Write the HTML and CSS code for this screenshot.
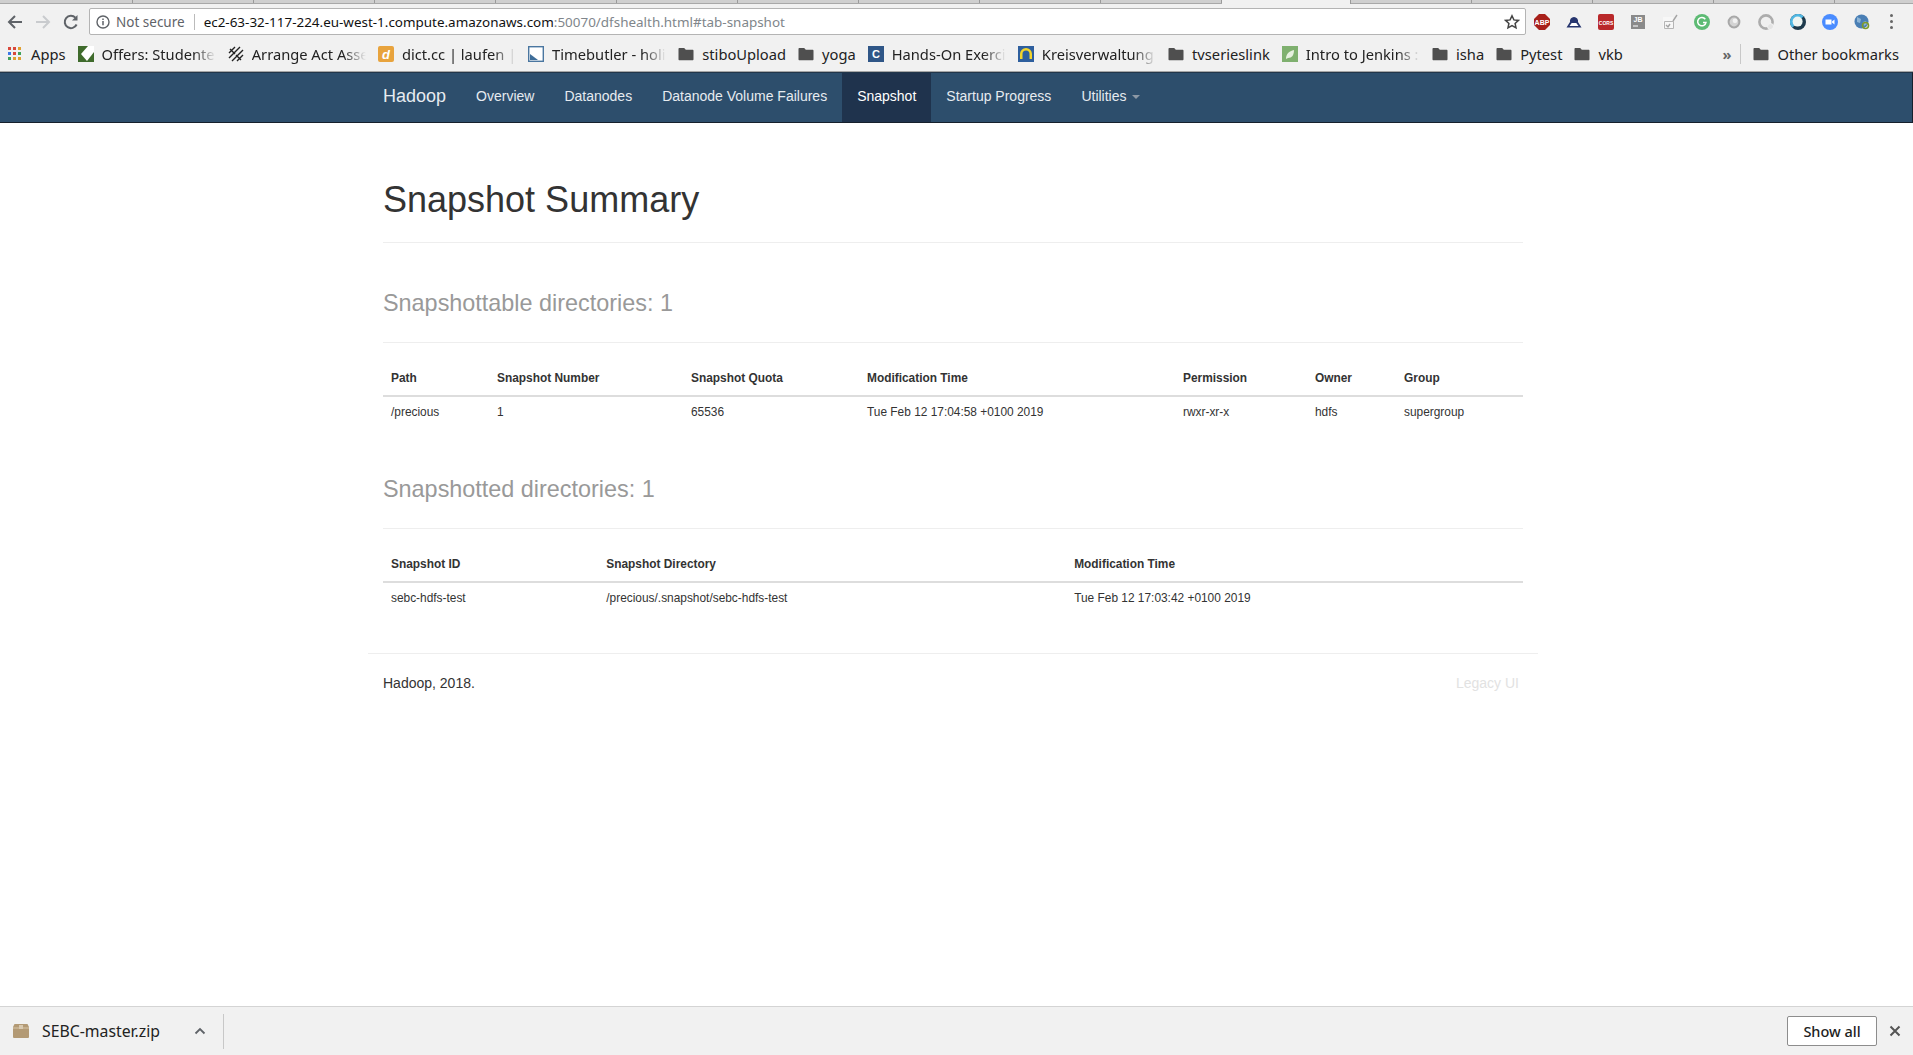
FILE: index.html
```html
<!DOCTYPE html>
<html lang="en">
<head>
    <meta charset="UTF-8">
    <title>Namenode information</title>
    <link rel="stylesheet" href="styles.css">
</head>
<body>
    <svg class="defs" width="0" height="0">
        <symbol id="folder" viewBox="0 0 16 14"><path d="M1.5 1h4.7l1.6 1.8h6.7c.6 0 1 .4 1 1v8.4c0 .6-.4 1-1 1h-13c-.6 0-1-.4-1-1V2c0-.6.4-1 1-1z" fill="#4f4f4f"/></symbol>
    </svg>

    <div class="browser">
        <div class="tabstrip">
            <span class="tab tab-first"></span><span class="tab"></span><span class="tab"></span><span class="tab"></span><span class="tab"></span>
            <span class="tab"></span><span class="tab"></span><span class="tab"></span><span class="tab"></span><span class="tab"></span>
            <span class="tab tab-active"></span>
            <span class="tab"></span><span class="tab"></span><span class="tab"></span><span class="tab"></span><span class="tab"></span>
        </div>
        <div class="toolbar">
            <svg class="nav-btn" width="18" height="18" viewBox="0 0 18 18"><path d="M16 9H3.5M9 3L3 9l6 6" fill="none" stroke="#5f6368" stroke-width="2"/></svg>
            <svg class="nav-btn" width="18" height="18" viewBox="0 0 18 18"><path d="M2 9h12.5M9 3l6 6-6 6" fill="none" stroke="#c9cbce" stroke-width="2"/></svg>
            <svg class="nav-btn" width="18" height="18" viewBox="0 0 18 18"><path d="M14.6 11.5A6.2 6.2 0 1 1 13.4 4.6" fill="none" stroke="#5f6368" stroke-width="2"/><path d="M15.5 2v5.5H10z" fill="#5f6368"/></svg>
            <div class="omnibox">
                <svg width="14" height="14" viewBox="0 0 14 14"><circle cx="7" cy="7" r="6" fill="none" stroke="#5f6368" stroke-width="1.4"/><path d="M7 6v4.2M7 3.5v1.5" stroke="#5f6368" stroke-width="1.5"/></svg>
                <span class="secure">Not secure</span>
                <span class="url"><b>ec2-63-32-117-224.eu-west-1.compute.amazonaws.com</b>:50070/dfshealth.html#tab-snapshot</span>
                <svg class="star" width="16" height="16" viewBox="0 0 16 16"><path d="M8 1.8l1.9 4.1 4.5.5-3.3 3 .9 4.4L8 11.6l-4 2.2.9-4.4-3.3-3 4.5-.5z" fill="none" stroke="#444" stroke-width="1.5"/></svg>
            </div>
            <div class="extensions">
                <span class="ext"><svg width="16" height="16" viewBox="0 0 16 16"><path d="M5 0h6l5 5v6l-5 5H5l-5-5V5z" fill="#a8201a"/><text x="8" y="10.6" class="ext-text abp">ABP</text></svg></span>
                <span class="ext"><svg width="16" height="16" viewBox="0 0 16 16"><path d="M.5 13.5L4 8a4.1 4.1 0 1 1 8 0l3.5 5.5z" fill="#26356e"/><path d="M3.5 12l2.2-3h4.6l2.2 3z" fill="#fff"/></svg></span>
                <span class="ext"><svg width="16" height="16" viewBox="0 0 16 16"><rect width="16" height="16" rx="2" fill="#b9282a"/><text x="8" y="10.5" class="ext-text cors">CORS</text></svg></span>
                <span class="ext"><svg width="16" height="16" viewBox="0 0 16 16"><rect x="1" y="1" width="14" height="14" fill="#8a8a8a"/><text x="8" y="8" class="ext-text jb">JB</text><path d="M3 12h5" stroke="#eee" stroke-width="1.2"/></svg></span>
                <span class="ext"><svg width="16" height="16" viewBox="0 0 16 16"><path d="M1 3h10v12H1z" fill="#f7f7f7"/><path d="M2.5 7.5h9v7h-9z" fill="none" stroke="#b5b5b5"/><path d="M4 11l2 2 2-3M11 7l4-6" fill="none" stroke="#a4a4a4" stroke-width="1.4"/></svg></span>
                <span class="ext"><svg width="16" height="16" viewBox="0 0 16 16"><circle cx="8" cy="8" r="8" fill="#5dbb74"/><path d="M11.3 5.2A4.2 4.2 0 1 0 12 8.4H9" fill="none" stroke="#fff" stroke-width="1.5"/></svg></span>
                <span class="ext"><svg width="16" height="16" viewBox="0 0 16 16"><circle cx="8" cy="8" r="5.4" fill="#d4d4d4" stroke="#a8a8a8" stroke-width="2"/><circle cx="9" cy="6.8" r="2.4" fill="#f2f2f2"/></svg></span>
                <span class="ext"><svg width="16" height="16" viewBox="0 0 16 16"><circle cx="8" cy="8" r="6.6" fill="#f0f0f0" stroke="#acacac" stroke-width="2.6"/><circle cx="12.5" cy="12.5" r="3" fill="#e4e4e4" stroke="#f4f4f4"/></svg></span>
                <span class="ext"><svg width="16" height="16" viewBox="0 0 16 16"><circle cx="8" cy="8" r="8" fill="#1d3a4c"/><path d="M2.3 13.7A8 8 0 0 1 13.7 2.3z" fill="#4fb6e2"/><circle cx="7.6" cy="7.6" r="5" fill="#eef5f2"/></svg></span>
                <span class="ext"><svg width="16" height="16" viewBox="0 0 16 16"><circle cx="8" cy="8" r="8" fill="#4a8cff"/><path d="M3.5 5.5h6v5h-6zM10 7.5l2.5-2v5L10 8.5z" fill="#fff"/></svg></span>
                <span class="ext"><svg width="16" height="16" viewBox="0 0 16 16"><circle cx="7.5" cy="7.5" r="7" fill="#4a7fb5"/><path d="M3 3l4 2-1 4-3-1zM9 8l3-1 1 3-3 2z" fill="#8db4d6"/><circle cx="11.5" cy="11.5" r="3" fill="none" stroke="#7f9a2a" stroke-width="1.6"/></svg></span>
                <span class="ext ext-menu"><i></i><i></i><i></i></span>
            </div>
        </div>
        <div class="bookmarks">
            <span class="bm bm-apps">
                <svg width="14" height="14" viewBox="0 0 14 14">
                    <path d="M0 0h3v3H0z" fill="#d9493c"/><path d="M5 0h3v3H5z" fill="#d9493c"/><path d="M10 0h3v3h-3z" fill="#e0a030"/>
                    <path d="M0 5h3v3H0z" fill="#3b78e7"/><path d="M5 5h3v3H5z" fill="#d9493c"/><path d="M10 5h3v3h-3z" fill="#3fa15a"/>
                    <path d="M0 10h3v3H0z" fill="#3fa15a"/><path d="M5 10h3v3H5z" fill="#e0a030"/><path d="M10 10h3v3h-3z" fill="#e0a030"/>
                </svg>
                Apps
            </span>
            <span class="bm bm-cut">
                <svg width="16" height="16" viewBox="0 0 16 16"><rect width="16" height="16" fill="#3f6b2c"/><path d="M3 8l7-8h6v6l-7 9z" fill="#fff"/></svg>
                <span class="bm-label">Offers: Studente</span>
            </span>
            <span class="bm bm-cut">
                <svg width="16" height="16" viewBox="0 0 16 16"><path d="M1 7l6-6M1 12L12 1M4 15L15 4M9 15l6-6M2 3l5 5M8 9l5 5" fill="none" stroke="#222" stroke-width="1.4"/></svg>
                <span class="bm-label">Arrange Act Asse</span>
            </span>
            <span class="bm bm-cut">
                <svg width="16" height="16" viewBox="0 0 16 16"><rect width="16" height="16" rx="2" fill="#e8a33d"/><text x="8" y="13" class="ext-text dict">d</text></svg>
                <span class="bm-label">dict.cc | laufen | W</span>
            </span>
            <span class="bm bm-cut">
                <svg width="16" height="16" viewBox="0 0 16 16"><rect x=".7" y=".7" width="14.6" height="14.6" fill="#fff" stroke="#4a76a0" stroke-width="1.4"/><path d="M2 8l8 6H2z" fill="#3f6d99"/></svg>
                <span class="bm-label">Timebutler - holi</span>
            </span>
            <span class="bm"><svg class="folder" width="16" height="14"><use href="#folder"/></svg>stiboUpload</span>
            <span class="bm"><svg class="folder" width="16" height="14"><use href="#folder"/></svg>yoga</span>
            <span class="bm bm-cut">
                <svg width="16" height="16" viewBox="0 0 16 16"><rect width="16" height="16" fill="#2f5687"/><text x="8" y="12" class="ext-text hands">C</text></svg>
                <span class="bm-label">Hands-On Exerci</span>
            </span>
            <span class="bm bm-cut">
                <svg width="16" height="16" viewBox="0 0 16 16"><rect width="16" height="16" fill="#2e5f9e"/><path d="M2 13V8a6 6 0 0 1 12 0v5h-2.5V8a3.5 3.5 0 0 0-7 0v5z" fill="#f3d52c"/></svg>
                <span class="bm-label">Kreisverwaltung</span>
            </span>
            <span class="bm"><svg class="folder" width="16" height="14"><use href="#folder"/></svg>tvserieslink</span>
            <span class="bm bm-cut">
                <svg width="16" height="16" viewBox="0 0 16 16"><rect width="16" height="16" fill="#7fb06f"/><path d="M4 13c0-5 3-8 8-9 0 5-2 8-6 8z" fill="#e6f0df"/></svg>
                <span class="bm-label">Intro to Jenkins :</span>
            </span>
            <span class="bm"><svg class="folder" width="16" height="14"><use href="#folder"/></svg>isha</span>
            <span class="bm"><svg class="folder" width="16" height="14"><use href="#folder"/></svg>Pytest</span>
            <span class="bm"><svg class="folder" width="16" height="14"><use href="#folder"/></svg>vkb</span>
            <span class="bm-right">
                <span class="bm-more">»</span>
                <span class="bm-divider"></span>
                <span class="bm"><svg class="folder" width="16" height="14"><use href="#folder"/></svg>Other bookmarks</span>
            </span>
        </div>
    </div>

    <nav class="navbar">
        <div class="container navbar-inner">
            <a class="brand">Hadoop</a>
            <a class="nav-link">Overview</a>
            <a class="nav-link">Datanodes</a>
            <a class="nav-link">Datanode Volume Failures</a>
            <a class="nav-link active">Snapshot</a>
            <a class="nav-link">Startup Progress</a>
            <a class="nav-link">Utilities <span class="caret"></span></a>
        </div>
    </nav>

    <main class="page">
        <div class="container">
            <div class="page-header"><h1>Snapshot Summary</h1></div>

            <div class="page-header sub-header"><h2>Snapshottable directories: 1</h2></div>
            <table class="table table-fixed">
                <colgroup>
                    <col class="col-path">
                    <col class="col-number">
                    <col class="col-quota">
                    <col class="col-time">
                    <col class="col-permission">
                    <col class="col-owner">
                    <col>
                </colgroup>
                <thead>
                    <tr>
                        <th>Path</th>
                        <th>Snapshot Number</th>
                        <th>Snapshot Quota</th>
                        <th>Modification Time</th>
                        <th>Permission</th>
                        <th>Owner</th>
                        <th>Group</th>
                    </tr>
                </thead>
                <tbody>
                    <tr>
                        <td>/precious</td>
                        <td>1</td>
                        <td>65536</td>
                        <td>Tue Feb 12 17:04:58 +0100 2019</td>
                        <td>rwxr-xr-x</td>
                        <td>hdfs</td>
                        <td>supergroup</td>
                    </tr>
                </tbody>
            </table>

            <div class="page-header sub-header"><h2>Snapshotted directories: 1</h2></div>
            <table class="table">
                <thead>
                    <tr>
                        <th>Snapshot ID</th>
                        <th>Snapshot Directory</th>
                        <th>Modification Time</th>
                    </tr>
                </thead>
                <tbody>
                    <tr>
                        <td>sebc-hdfs-test</td>
                        <td>/precious/.snapshot/sebc-hdfs-test</td>
                        <td>Tue Feb 12 17:03:42 +0100 2019</td>
                    </tr>
                </tbody>
            </table>
        </div>

        <div class="footer-wrap">
            <footer class="footer">
                <span>Hadoop, 2018.</span>
                <a class="legacy">Legacy UI</a>
            </footer>
        </div>
    </main>

    <div class="download-bar">
        <svg width="16" height="14" viewBox="0 0 16 14"><path d="M1.5 0h13L16 3v10a1 1 0 0 1-1 1H1a1 1 0 0 1-1-1V3z" fill="#b39a75"/><path d="M0 4h16" stroke="#d8c6a8"/><path d="M6 1h4v4H6z" fill="#d8c9b0"/></svg>
        <span class="file-name">SEBC-master.zip</span>
        <svg class="chevron" width="12" height="8" viewBox="0 0 12 8"><path d="M1.5 6.5L6 2l4.5 4.5" fill="none" stroke="#5f6368" stroke-width="1.8"/></svg>
        <span class="bar-divider"></span>
        <button class="show-all">Show all</button>
        <svg class="bar-close" width="12" height="12" viewBox="0 0 12 12"><path d="M1.5 1.5l9 9M10.5 1.5l-9 9" stroke="#555" stroke-width="2"/></svg>
    </div>
</body>
</html>
```

FILE: styles.css
```css
* {
    box-sizing: border-box;
}
html, body {
    height: 100%;
}
body {
    margin: 0;
    display: flex;
    flex-direction: column;
    height: 100vh;
    overflow: hidden;
    background-color: #fff;
    color: #333;
    font-family: "Liberation Sans", Arial, sans-serif;
    font-size: 14px;
    line-height: 20px;
}
.defs {
    position: absolute;
}

/* browser chrome */
.browser {
    flex: none;
    height: 72px;
    background-color: #f1f1f1;
    border-bottom: 1px solid #a6a6a6;
    font-family: "Noto Sans", sans-serif;
    font-size: 14.7px;
    color: #222;
}
.tabstrip {
    display: flex;
    height: 4px;
    background-color: #cfcfcf;
    border-bottom: 1px solid #a8a8a8;
}
.tab {
    flex: none;
    width: 121px;
    border-right: 1px solid #9a9a9a;
}
.tab-first {
    width: 133px;
}
.tab-active {
    width: 129px;
    height: 4px;
    background-color: #f1f1f1;
}
.toolbar {
    display: flex;
    align-items: center;
    height: 33px;
    padding: 2px 0 0 6px;
}
.nav-btn {
    flex: none;
    margin-right: 10px;
}
.omnibox {
    flex: none;
    display: flex;
    align-items: center;
    width: 1437px;
    height: 27px;
    margin-left: -1px;
    padding: 0 5px 0 6px;
    background-color: #fff;
    border: 1px solid #b4b4b4;
    border-radius: 2px;
    font-size: 13.5px;
}
.secure {
    margin-left: 6px;
    padding-right: 9px;
    border-right: 1px solid #bbb;
    line-height: 16px;
    color: #5f6368;
}
.url {
    margin-left: 9px;
    color: #80868b;
    font-size: 13.45px;
    white-space: nowrap;
}
.url b {
    font-weight: 400;
    color: #111;
}
.star {
    margin-left: auto;
}
.extensions {
    display: flex;
    align-items: center;
}
.ext {
    display: flex;
    justify-content: center;
    width: 32px;
}
.ext-menu {
    flex-direction: column;
    align-items: center;
    gap: 3px;
    width: 26px;
}
.ext-menu i {
    width: 3px;
    height: 3px;
    border-radius: 50%;
    background-color: #666;
}
.ext-text {
    font-family: "Liberation Sans", sans-serif;
    font-weight: 700;
    text-anchor: middle;
    fill: #fff;
}
.abp { font-size: 7px; }
.cors { font-size: 5px; }
.jb { font-size: 7px; }
.dict { font-size: 13px; font-style: italic; }
.hands { font-size: 11px; }

.bookmarks {
    display: flex;
    align-items: center;
    gap: 12px;
    height: 34px;
    padding: 0 14px 1px 8px;
    white-space: nowrap;
}
.bm {
    display: flex;
    align-items: center;
    gap: 8px;
}
.bm-apps {
    gap: 9px;
}
.bm-cut {
    flex: none;
    width: 138.2px;
}
.bm-label {
    flex: 1;
    overflow: hidden;
    -webkit-mask-image: linear-gradient(to right, #000 80%, transparent 100%);
    mask-image: linear-gradient(to right, #000 80%, transparent 100%);
}
.folder {
    flex: none;
}
.bm-right {
    display: flex;
    align-items: center;
    gap: 12px;
    margin-left: auto;
}
.bm-more {
    margin-right: -3px;
    color: #666;
    font-weight: 700;
}
.bm-divider {
    width: 1px;
    height: 20px;
    background-color: #c8c8c8;
}

/* hadoop page */
.container {
    width: 1170px;
    margin: 0 auto;
    padding: 0 15px;
}
.navbar {
    flex: none;
    height: 51px;
    padding-right: 6px;
    background-color: #2d4e6c;
    border: 1px solid #16202c;
    border-top-color: #22364a;
    border-left: 0;
}
.navbar-inner {
    display: flex;
}
.navbar a {
    color: #e6ebf0;
    height: 49px;
    line-height: 20px;
    padding: 13px 15px;
}
.brand {
    margin-left: -15px;
    font-size: 18px;
}
.nav-link.active {
    background-color: #1f334d;
    color: #fff;
}
.caret {
    display: inline-block;
    margin-left: 2px;
    vertical-align: middle;
    border-top: 4px solid #8c98a5;
    border-left: 4px solid transparent;
    border-right: 4px solid transparent;
}
.page {
    flex: 1;
    min-height: 0;
    padding-right: 7px;
}
.page-header {
    margin: 57px 0 20px;
    padding-bottom: 12px;
    border-bottom: 1px solid #eee;
}
.page-header h1 {
    margin: 20px 0 10px;
    font-size: 36px;
    font-weight: 500;
    line-height: 40px;
}
.sub-header {
    margin: 47px 0 19px;
    padding-bottom: 9px;
}
.page-header h2 {
    margin: 20px 0 10px;
    padding-bottom: 7px;
    font-size: 23.4px;
    font-weight: 400;
    line-height: 26px;
    color: #999;
}
.table {
    width: 100%;
    margin-bottom: 20px;
    border-collapse: collapse;
    font-size: 11.9px;
    line-height: 17px;
}
.table-fixed {
    table-layout: fixed;
}
.col-path { width: 106px; }
.col-number { width: 194px; }
.col-quota { width: 176px; }
.col-time { width: 316px; }
.col-permission { width: 132px; }
.col-owner { width: 89px; }
.table th {
    padding: 8px;
    text-align: left;
    border-bottom: 2px solid #ddd;
}
.table td {
    padding: 7px 8px 8px;
}
.footer-wrap {
    width: 1170px;
    margin: 0 auto;
}
.footer {
    display: flex;
    justify-content: space-between;
    margin-top: 38px;
    padding: 19px 19px 0 15px;
    border-top: 1px solid #eee;
}
.legacy {
    color: #e2e2e2;
}

/* download shelf */
.download-bar {
    flex: none;
    display: flex;
    align-items: center;
    height: 49px;
    padding: 0 12px 0 13px;
    background-color: #f1f1f1;
    border-top: 1px solid #d4d4d4;
    font-family: "Noto Sans", sans-serif;
    font-size: 15.8px;
    color: #222;
}
.file-name {
    margin-left: 13px;
}
.chevron {
    margin-left: 34px;
}
.bar-divider {
    width: 1px;
    height: 35px;
    margin-left: 17px;
    background-color: #c8c8c8;
}
.show-all {
    margin-left: auto;
    width: 90px;
    height: 30px;
    padding: 0;
    background-color: #fff;
    border: 1px solid #8d8d8d;
    border-radius: 2px;
    font-family: "Noto Sans", sans-serif;
    font-size: 14.5px;
    font-weight: 500;
    color: #222;
}
.bar-close {
    margin-left: 12px;
}
```
